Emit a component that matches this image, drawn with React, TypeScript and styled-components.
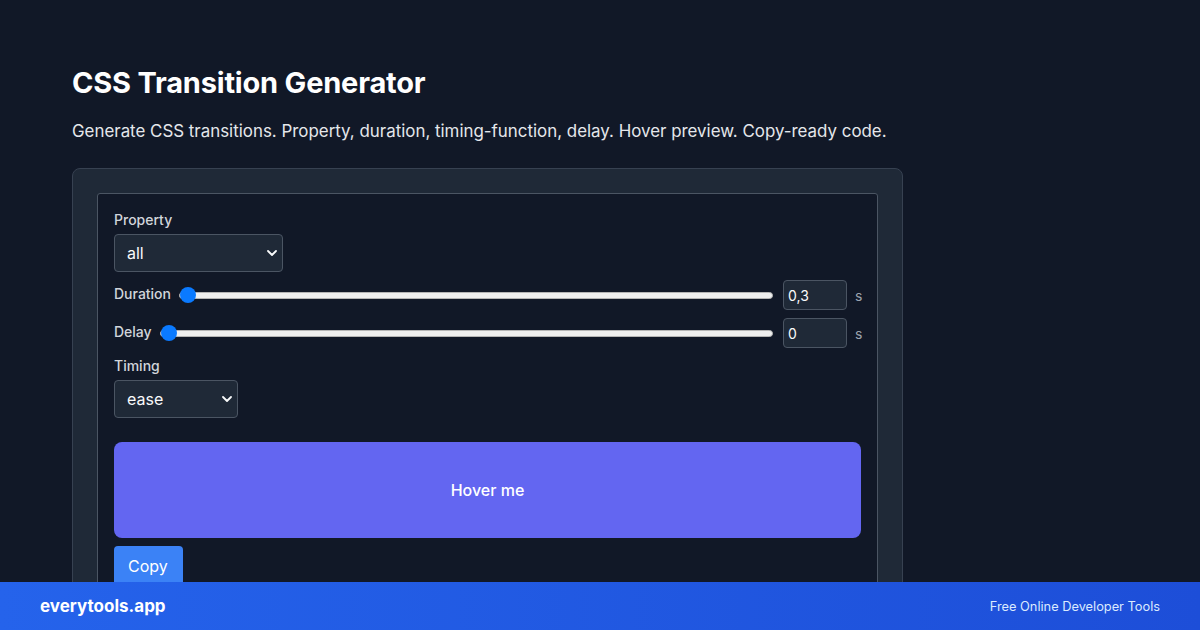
import React from "react";
import styled, { createGlobalStyle } from "styled-components";

const Global = createGlobalStyle`
  html, body { margin: 0; padding: 0; background: #111827; }
  body { font-family: Inter, "Noto Sans", "Liberation Sans", sans-serif; color: #f9fafb; -webkit-font-smoothing: antialiased; }
  * { box-sizing: border-box; }
`;

const Page = styled.main`
  padding: 65px 72px 120px;
  min-height: 630px;
`;

const Title = styled.h1`
  margin: 0;
  font-size: 29px;
  line-height: 36px;
  font-weight: 700;
  color: #ffffff;
  letter-spacing: -0.2px;
`;

const Subtitle = styled.p`
  margin: 18px 0 25px;
  font-size: 16.9px;
  line-height: 24px;
  color: #e5e7eb;
`;

const Card = styled.section`
  width: 831px;
  background: #1f2937;
  border: 1px solid #374151;
  border-radius: 8px;
  padding: 24px;
`;

const Panel = styled.div`
  background: #111827;
  border: 1px solid #4b5563;
  border-radius: 3px;
  padding: 16px 16px 40px;
  display: flex;
  flex-direction: column;
`;

const Label = styled.label`
  display: block;
  font-size: 14px;
  line-height: 20px;
  font-weight: 500;
  color: #d1d5db;
  margin-bottom: 4px;
`;

const SelectWrap = styled.div<{ $w: number }>`
  position: relative;
  width: ${(p) => p.$w}px;
  margin-bottom: 8px;
`;

const Select = styled.select`
  appearance: none;
  -webkit-appearance: none;
  width: 100%;
  height: 38px;
  background: #1f2937;
  border: 1px solid #4b5563;
  border-radius: 4px;
  color: #f9fafb;
  font-family: inherit;
  font-size: 16px;
  padding: 0 24px 0 12px;
  outline: none;
`;

const Chevron = styled.svg`
  position: absolute;
  right: 6px;
  top: 50%;
  transform: translateY(-50%);
  pointer-events: none;
`;

const Row = styled.div`
  display: flex;
  align-items: center;
  gap: 8px;
  height: 30px;
  margin-bottom: 8px;
`;

const RowLabel = styled.span`
  font-size: 14px;
  font-weight: 500;
  color: #d1d5db;
  padding-bottom: 4px;
`;

const Range = styled.input`
  flex: 1;
  margin: 0 2px 0 0;
  -webkit-appearance: none;
  appearance: none;
  background: transparent;
  height: 16px;
  &::-webkit-slider-runnable-track {
    height: 7px;
    background: #efefef;
    border: 1px solid #b5b5b5;
    border-radius: 4px;
  }
  &::-webkit-slider-thumb {
    -webkit-appearance: none;
    width: 16px;
    height: 16px;
    border-radius: 50%;
    background: #0a7aff;
    border: none;
    margin-top: -5.5px;
  }
`;

const NumInput = styled.input`
  width: 64px;
  height: 30px;
  background: #1f2937;
  border: 1px solid #4b5563;
  border-radius: 4px;
  color: #f9fafb;
  font-family: inherit;
  font-size: 14px;
  padding: 0 4px;
  margin: 0;
  outline: none;
`;

const Unit = styled.span`
  font-size: 14px;
  color: #9ca3af;
  width: 6px;
`;

const Preview = styled.div`
  margin-top: 16px;
  height: 96px;
  border-radius: 8px;
  background: #6366f1;
  color: #ffffff;
  font-size: 16px;
  font-weight: 500;
  display: flex;
  align-items: center;
  justify-content: center;
`;

const CopyButton = styled.button`
  align-self: flex-start;
  margin-top: 8px;
  height: 40px;
  padding: 0 15px 0 14px;
  background: #3b82f6;
  color: #ffffff;
  border: none;
  border-radius: 4px;
  font-family: inherit;
  font-size: 16px;
`;

const Footer = styled.footer`
  position: fixed;
  left: 0;
  right: 0;
  bottom: 0;
  height: 48px;
  background: linear-gradient(90deg, #2563eb 0%, #1d4ed8 100%);
  display: flex;
  align-items: center;
  justify-content: space-between;
  padding: 0 40px;
`;

const Brand = styled.span`
  font-size: 17px;
  font-weight: 700;
  color: #ffffff;
`;

const Tagline = styled.span`
  font-size: 12.8px;
  color: #dbeafe;
`;

const Chev = () => (
  <Chevron width="10" height="6" viewBox="0 0 10 6">
    <path d="M1 1l4 4 4-4" fill="none" stroke="#f9fafb" strokeWidth="1.8" strokeLinecap="round" strokeLinejoin="round" />
  </Chevron>
);

export default function App() {
  return (
    <>
      <Global />
      <Page>
        <Title>CSS Transition Generator</Title>
        <Subtitle>
          Generate CSS transitions. Property, duration, timing-function, delay. Hover preview. Copy-ready code.
        </Subtitle>
        <Card>
          <Panel>
            <Label>Property</Label>
            <SelectWrap $w={169}>
              <Select defaultValue="all">
                <option value="all">all</option>
                <option value="opacity">opacity</option>
                <option value="transform">transform</option>
                <option value="background">background</option>
              </Select>
              <Chev />
            </SelectWrap>
            <Row>
              <RowLabel>Duration</RowLabel>
              <Range type="range" min={0} max={5} step={0.1} defaultValue={0} />
              <NumInput type="text" defaultValue="0,3" />
              <Unit>s</Unit>
            </Row>
            <Row>
              <RowLabel>Delay</RowLabel>
              <Range type="range" min={0} max={5} step={0.1} defaultValue={0} />
              <NumInput type="text" defaultValue="0" />
              <Unit>s</Unit>
            </Row>
            <Label>Timing</Label>
            <SelectWrap $w={124}>
              <Select defaultValue="ease">
                <option value="ease">ease</option>
                <option value="linear">linear</option>
                <option value="ease-in">ease-in</option>
                <option value="ease-out">ease-out</option>
              </Select>
              <Chev />
            </SelectWrap>
            <Preview>Hover me</Preview>
            <CopyButton>Copy</CopyButton>
          </Panel>
        </Card>
      </Page>
      <Footer>
        <Brand>everytools.app</Brand>
        <Tagline>Free Online Developer Tools</Tagline>
      </Footer>
    </>
  );
}
